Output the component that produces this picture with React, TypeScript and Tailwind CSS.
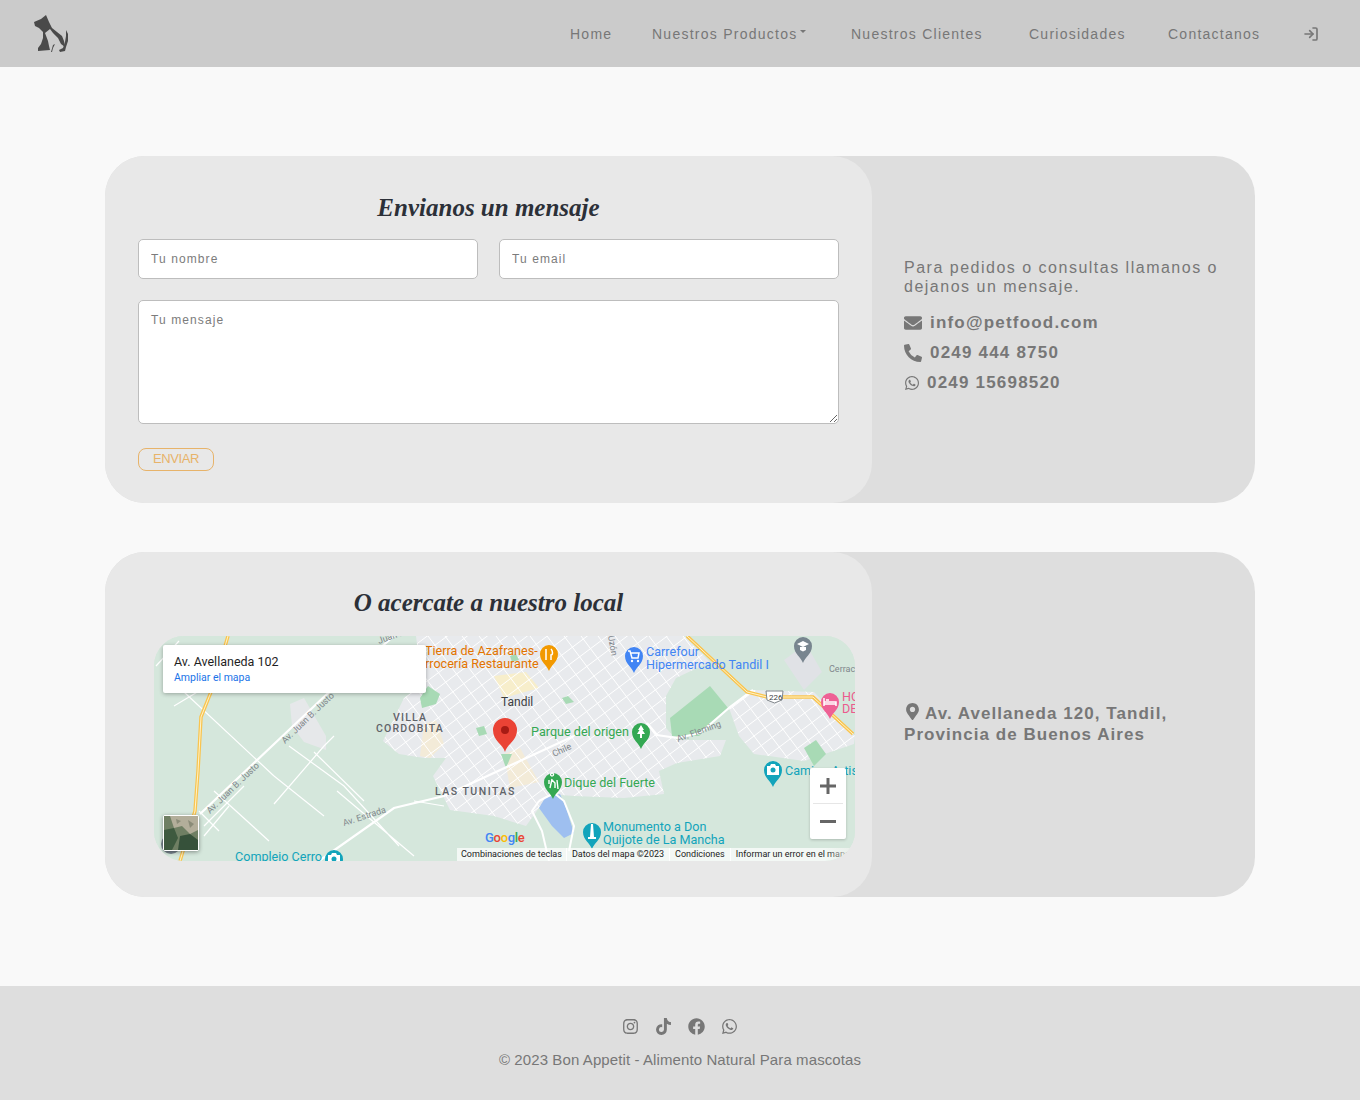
import React from 'react';
import { FaEnvelope, FaPhoneAlt, FaWhatsapp, FaMapMarkerAlt, FaInstagram, FaTiktok, FaFacebook } from 'react-icons/fa';
import { LogIn } from 'lucide-react';

const navItems = [
    { label: 'Home', width: 'w-[38px]' },
    { label: 'Nuestros Productos', width: 'w-[155px]', caret: true },
    { label: 'Nuestros Clientes', width: 'w-[134px]' },
    { label: 'Curiosidades', width: 'w-[95px]' },
    { label: 'Contactanos', width: 'w-[91px]' },
];

const Logo = () => (
    <svg width="38" height="40" viewBox="0 0 38 40" fill="#4a4a4a">
        <path d="M13 1 L16 8 L19 14 L24 18 L29 22 L31 27 L32 33 L28 30 L25 24 L20 19 L17 15 L12 19 L15 27 L16 32 L17 36 L5 37 L5 34 L8 30 L10 24 L10 18 L6 14 L2 12 L1 8 L8 5 Z" />
        <path d="M33 16 L35 20 L35 27 L33 33 L32 37 L27 38 L26 36 L30 34 L32 28 L33 22 Z" />
        <path d="M20 31 L22 30 L20 34 L19 38 L18 38 Z" />
    </svg>
);

const Pin = ({ x, y, color, children }: { x: number; y: number; color: string; children?: React.ReactNode }) => (
    <g transform={`translate(${x} ${y})`}>
        <path d="M0 16 C-2 10 -9 7 -9 -1 A9 9 0 1 1 9 -1 C9 7 2 10 0 16 Z" fill={color} />
        {children}
    </g>
);

const gridA = Array.from({ length: 60 }, (_, i) => i * 17 - 200);
const gridB = Array.from({ length: 50 }, (_, i) => i * 15 - 150);

const cityPath = "M262 0 L530 0 L556 26 L522 42 L512 60 L512 92 L522 104 L572 104 L566 120 L523 127 L505 135 L510 158 L470 162 L420 160 L395 158 L372 190 L340 180 L296 174 L279 140 L292 122 L270 122 L245 118 L229 105 L250 62 L268 48 Z";
const eastPath = "M575 72 L597 54 L660 56 L701 100 L700 108 L650 125 L600 118 L585 100 Z";

const MapDrawing = () => (
    <svg className="absolute inset-0" width="701" height="225" viewBox="0 0 701 225" fontFamily="Roboto, sans-serif">
        <defs>
            <clipPath id="city"><path d={cityPath} /></clipPath>
            <clipPath id="cityEast"><path d={eastPath} /></clipPath>
        </defs>
        <rect width="701" height="225" fill="#d5e7dc" />
        <path d={cityPath} fill="#e8eaed" />
        <path d={eastPath} fill="#e8eaed" />
        <path d="M136 68 L150 62 L172 100 L172 114 L150 106 L138 90 Z" fill="#e6e8ea" />
        <path d="M630 24 L652 8 L668 36 L650 54 Z" fill="#e0e2e6" />
        <path d="M270 88 L282 84 L290 108 L276 122 L266 120 Z" fill="#f3ebd8" />
        <path d="M350 118 L366 112 L385 146 L356 152 Z" fill="#f3ebd8" />
        <path d="M340 40 L372 36 L385 52 L350 62 Z" fill="#f7eecb" />
        <g clipPath="url(#city)" stroke="#fff" strokeWidth="1">
            {gridA.map(v => <line key={v} x1={v} y1="-20" x2={v + 180} y2="220" />)}
            {gridB.map(v => <line key={v} x1="200" y1={v + 160} x2="560" y2={v - 110} />)}
        </g>
        <g clipPath="url(#cityEast)" stroke="#fff" strokeWidth="1">
            {gridA.map(v => <line key={v} x1={v + 200} y1="-20" x2={v + 380} y2="220" />)}
            {gridB.map(v => <line key={v} x1="500" y1={v + 160} x2="720" y2={v - 5} />)}
        </g>
        <g fill="#a8dab5">
            <path d="M516 82 L556 50 L574 72 L545 100 L518 100 Z" />
            <path d="M650 112 L662 104 L672 118 L660 130 Z" />
            <path d="M266 62 L274 50 L286 58 L282 68 L268 72 Z" />
            <path d="M408 62 L414 60 L420 66 L412 68 Z" />
            <path d="M347 118 L358 118 L352 132 Z" />
            <path d="M322 92 L330 90 L333 98 L325 100 Z" />
            <path d="M356 20 L362 18 L365 24 L358 26 Z" />
        </g>
        <path d="M391 162 L406 158 L412 172 L420 197 L410 202 L398 190 L385 172 Z" fill="#9ebff0" />
        <path d="M385 165 L400 157 L410 165 L420 190 L415 215 M385 165 L378 175 L388 195 L395 225" fill="none" stroke="#fff" strokeWidth="2" />
        <g stroke="#fff" strokeWidth="1.2" fill="none">
            <path d="M2 30 L25 5 M20 70 L70 40 M30 56 L120 140 M120 168 L170 110 L180 100 M135 110 L190 150 L245 210 M183 155 L260 220" />
            <path d="M160 116 L210 165 M120 140 L170 180 M260 165 L290 170" />
            <path d="M60 155 L115 205 M75 170 L50 200 M90 150 L50 190 M45 175 L65 195" />
        </g>
        <path d="M46 178 L173 58 L240 0" stroke="#fff" strokeWidth="2.2" fill="none" />
        <path d="M165 225 L240 172 L290 160 L420 100" stroke="#fff" strokeWidth="2.2" fill="none" />
        <path d="M493 87 L503 99 L523 102 L546 97 L576 71 L599 54" stroke="#fff" strokeWidth="2.2" fill="none" />
        <path d="M74 0 L59 51 L47 81 L44 135 L41 175 L26 225" stroke="#f9c44f" strokeWidth="3.5" fill="none" />
        <path d="M74 0 L59 51 L47 81 L44 135 L41 175 L26 225" stroke="#fff3c9" strokeWidth="1" fill="none" />
        <path d="M533 0 L593 56 L613 61 L659 61 L699 98" stroke="#f9c44f" strokeWidth="3.5" fill="none" />
        <path d="M533 0 L593 56 L613 61 L659 61 L699 98" stroke="#fff3c9" strokeWidth="1" fill="none" />

        <text x="239" y="85" fontSize="10.5" letterSpacing="1.2" fill="#5f6368" fontWeight="500">VILLA</text>
        <text x="222" y="96" fontSize="10.5" letterSpacing="1.2" fill="#5f6368" fontWeight="500">CORDOBITA</text>
        <text x="281" y="159" fontSize="10.5" letterSpacing="1.5" fill="#5f6368" fontWeight="500">LAS TUNITAS</text>
        <text x="347" y="70" fontSize="12" fill="#3c4043">Tandil</text>
        <g fontSize="9" fill="#80868b">
            <text transform="translate(56 178) rotate(-44)">Av. Juan B. Justo</text>
            <text transform="translate(131 108) rotate(-44)">Av. Juan B. Justo</text>
            <text transform="translate(190 190) rotate(-18)">Av. Estrada</text>
            <text transform="translate(524 106) rotate(-20)">Av. Fleming</text>
            <text transform="translate(400 121) rotate(-25)">Chile</text>
            <text transform="translate(225 8) rotate(-20)">Juan B.</text>
            <text transform="translate(454 0) rotate(80)">Uzón</text>
            <text x="675" y="36">Cerrac</text>
        </g>
        <g fontSize="12.6">
            <text x="271" y="19" fill="#e37400">Tierra de Azafranes-</text>
            <text x="271" y="32" fill="#e37400">rrocería Restaurante</text>
            <text x="492" y="20" fill="#4285f4">Carrefour</text>
            <text x="492" y="33" fill="#4285f4">Hipermercado Tandil I</text>
            <text x="377" y="100" fill="#34a853">Parque del origen</text>
            <text x="410" y="151" fill="#34a853">Dique del Fuerte</text>
            <text x="449" y="195" fill="#12a4bb">Monumento a Don</text>
            <text x="449" y="208" fill="#12a4bb">Quijote de La Mancha</text>
            <text x="631" y="139" fill="#12a4bb">Camino Artist</text>
            <text x="688" y="65" fill="#ec5a8d">HO</text>
            <text x="688" y="77" fill="#ec5a8d">DE</text>
            <text x="81" y="225" fill="#12a4bb">Complejo Cerro</text>
        </g>
        <Pin x={395} y={19} color="#f29900">
            <path d="M-3 -6 V-1 M-3 -1 V5 M2 -6 C4 -4 4 0 2 0 V5" stroke="#fff" strokeWidth="1.5" fill="none" />
        </Pin>
        <Pin x={480} y={21} color="#4285f4">
            <path d="M-6 -6 H-4 L-2 1 H4 L5 -4 H-3" stroke="#fff" strokeWidth="1.5" fill="none" />
            <circle cx="-2" cy="4" r="1.2" fill="#fff" /><circle cx="4" cy="4" r="1.2" fill="#fff" />
        </Pin>
        <Pin x={649} y={11} color="#78858f">
            <path d="M-6 -3 L0 -6 L6 -3 L0 0 Z M-3 0 V3 L0 4.5 L3 3 V0" fill="#fff" />
        </Pin>
        <Pin x={676} y={67} color="#ee6195">
            <path d="M-6 -5 V3 M-6 1 H6 V3 M-6 -1 H6 V1 M-4 -3 H-1" stroke="#fff" strokeWidth="1.5" fill="none" />
        </Pin>
        <Pin x={487} y={97} color="#34a853">
            <path d="M0 -8 L3 -3 H1.5 L4 1 H1 V5 H-1 V1 H-4 L-1.5 -3 H-3 Z" fill="#fff" />
        </Pin>
        <Pin x={399} y={147} color="#34a853">
            <path d="M-1 -7 A1.5 1.5 0 1 1 -0.9 -7 M-1 -4 L-3 5 M-1 -3 L2 0 L2 5 M4 -3 L5 6 M-4 -3 L-4 1" stroke="#fff" strokeWidth="1.4" fill="none" />
        </Pin>
        <Pin x={438} y={197} color="#12a4bb">
            <path d="M-1 -9 H1 L2 4 H4 V6 H-4 V4 H-2 Z" fill="#fff" />
        </Pin>
        <Pin x={619} y={135} color="#12a4bb">
            <path d="M-6 -5 H-3 L-2 -7 H2 L3 -5 H6 V4 H-6 Z" fill="#fff" />
            <circle cx="0" cy="-1" r="2.5" fill="#12a4bb" />
        </Pin>
        <Pin x={180} y={224} color="#12a4bb">
            <path d="M-6 -5 H-3 L-2 -7 H2 L3 -5 H6 V4 H-6 Z" fill="#fff" />
            <circle cx="0" cy="-1" r="2.5" fill="#12a4bb" />
        </Pin>
        <g transform="translate(351 97)">
            <path d="M0 19 C-2 11 -12 8 -12 -3 A12 12 0 1 1 12 -3 C12 8 2 11 0 19 Z" fill="#ea4335" />
            <circle cx="0" cy="-3" r="4" fill="#a61b14" />
        </g>
        <g>
            <path d="M612 55 H629 L628 64 L620.5 67 L613 64 Z" fill="#fff" stroke="#80868b" />
            <text x="615" y="64" fontSize="8" fill="#3c4043">226</text>
        </g>
        <circle cx="17" cy="208" r="10" fill="#78858f" />
    </svg>
);

const SatelliteThumb = () => (
    <svg width="34" height="34" viewBox="0 0 34 34">
        <rect width="34" height="34" fill="#6f7f63" />
        <path d="M6 0 H34 V14 L26 18 L18 10 L10 12 Z" fill="#b3ae9a" />
        <path d="M0 14 L10 12 L14 22 L8 34 H0 Z" fill="#3e5a3f" />
        <path d="M16 20 L26 18 L34 24 V34 H14 Z" fill="#36513a" />
        <path d="M24 4 L30 8 L26 12 Z M12 3 L17 5 L13 8 Z" fill="#8b8c78" />
    </svg>
);

const MapEmbed = () => (
    <div className="relative h-[225px] w-[701px] overflow-hidden rounded-[30px] bg-[#d5e7dc] font-['Roboto',sans-serif]">
        <MapDrawing />
        <div className="absolute left-[9px] top-[9px] h-[48px] w-[263px] rounded-[2px] bg-white px-[11px] pt-[9px] shadow-[0_1px_4px_rgba(0,0,0,0.3)]">
            <p className="text-[12.5px] leading-[16px] text-[#1f1f1f]">Av. Avellaneda 102</p>
            <p className="text-[10.5px] leading-[15px] text-[#1a73e8]">Ampliar el mapa</p>
        </div>
        <div className="absolute left-[9px] top-[179px] h-[36px] w-[36px] rounded-[2px] border border-white shadow-[0_1px_4px_rgba(0,0,0,0.4)]">
            <SatelliteThumb />
        </div>
        <div className="absolute left-[331px] top-[195px] text-[13px] font-medium leading-[14px] tracking-[-0.3px]">
            <span className="text-[#4285f4]">G</span><span className="text-[#ea4335]">o</span><span className="text-[#fbbc05]">o</span><span className="text-[#4285f4]">g</span><span className="text-[#34a853]">l</span><span className="text-[#ea4335]">e</span>
        </div>
        <div className="absolute left-[656px] top-[132px] flex h-[71px] w-[36px] flex-col items-center rounded-[2px] bg-white shadow-[0_1px_3px_rgba(0,0,0,0.2)]">
            <div className="flex h-[35px] items-center justify-center">
                <svg width="16" height="16" viewBox="0 0 16 16" fill="#666"><path d="M6.5 0 H9.5 V6.5 H16 V9.5 H9.5 V16 H6.5 V9.5 H0 V6.5 H6.5 Z" /></svg>
            </div>
            <div className="h-px w-[30px] bg-[#e6e6e6]" />
            <div className="flex h-[35px] items-center justify-center"><div className="h-[3px] w-[16px] bg-[#666]" /></div>
        </div>
        <div className="absolute bottom-0 left-[303px] flex h-[13px] w-[398px] items-center overflow-hidden bg-white/70 text-[9px] leading-[13px] text-[#222]">
            <span className="whitespace-nowrap px-[4px]">Combinaciones de teclas</span>
            <span className="whitespace-nowrap border-l border-white px-[5px]">Datos del mapa ©2023</span>
            <span className="whitespace-nowrap border-l border-white px-[5px]">Condiciones</span>
            <span className="whitespace-nowrap border-l border-white px-[5px]">Informar un error en el mapa</span>
        </div>
        <div className="absolute bottom-0 right-0 h-[13px] w-[30px] bg-gradient-to-r from-transparent to-[#e8eee9]" />
    </div>
);

export default function App() {
    const display = "font-['Liberation_Sans',sans-serif]";
    const script = "font-['Liberation_Serif',serif] italic font-bold text-[#2c3038]";
    const field = "w-full rounded-[5px] border border-[#bdbdbd] bg-white px-3 text-[12px] tracking-[1.1px] text-[#666] outline-none placeholder:text-[#7c7c7c] " + display;

    return (
        <div className="min-h-[1100px] bg-[#f9f9f9]">
            <nav className="flex h-[67px] items-center justify-between bg-[#cbcbcb] pl-[33px] pr-[41px]">
                <Logo />
                <div className={"flex items-center gap-[44px] pt-[1px] text-[14px] tracking-[1.25px] text-[#777] " + display}>
                    {navItems.map(item => (
                        <a key={item.label} className={"flex items-center whitespace-nowrap " + item.width}>
                            {item.label}
                            {item.caret && <span className="mb-[5px] ml-[3px] h-0 w-0 border-x-[3px] border-t-[3px] border-x-transparent border-t-[#777]" />}
                        </a>
                    ))}
                    <LogIn size={16} strokeWidth={2.5} className="text-[#777]" />
                </div>
            </nav>

            <main className="mx-auto flex w-[1150px] flex-col gap-[49px] pt-[89px]">
                <section className="flex h-[347px] rounded-[40px] bg-[#dedede]">
                    <div className="flex w-[767px] flex-col rounded-[40px] bg-[#e8e8e8] px-[33px]">
                        <h2 className={"mt-[31px] h-[52px] text-center text-[25px] leading-[42px] " + script}>Envianos un mensaje</h2>
                        <form className="flex flex-col">
                            <div className="flex gap-[21px]">
                                <input className={"h-[40px] " + field} placeholder="Tu nombre" />
                                <input className={"h-[40px] " + field} placeholder="Tu email" />
                            </div>
                            <textarea className={"mt-[21px] block h-[124px] pt-[10px] " + field} placeholder="Tu mensaje" />
                            <button type="button" className="mt-[24px] h-[23px] w-[76px] rounded-[8px] border border-[#e7b36a] pb-[1px] font-['Liberation_Sans',sans-serif] text-[13px] tracking-[-0.4px] text-[#e7b36a]">ENVIAR</button>
                        </form>
                    </div>
                    <div className={"flex flex-1 flex-col justify-center px-[32px] pb-[3px] text-[#777] " + display}>
                        <p className="text-[16px] leading-[19px] tracking-[1.5px]">Para pedidos o consultas llamanos o dejanos un mensaje.</p>
                        <div className="mt-[12px] flex flex-col text-[17px] font-bold leading-[30px] tracking-[1.2px]">
                            <div className="flex items-center gap-[8px]"><FaEnvelope size={18} />info@petfood.com</div>
                            <div className="flex items-center gap-[8px]"><FaPhoneAlt size={18} />0249 444 8750</div>
                            <div className="flex items-center gap-[7px]"><FaWhatsapp size={16} />0249 15698520</div>
                        </div>
                    </div>
                </section>

                <section className="flex h-[345px] rounded-[40px] bg-[#dedede]">
                    <div className="flex w-[767px] flex-col rounded-[40px] bg-[#e8e8e8]">
                        <h2 className={"mt-[30px] h-[54px] text-center text-[25px] leading-[42px] " + script}>O acercate a nuestro local</h2>
                        <div className="ml-[49px]"><MapEmbed /></div>
                    </div>
                    <div className={"flex flex-1 flex-col justify-center px-[32px] pb-[2px] text-[17px] font-bold leading-[21px] tracking-[1.05px] text-[#777] " + display}>
                        <p><FaMapMarkerAlt size={17} className="mr-[4px] inline align-[-1px]" />Av. Avellaneda 120, Tandil,<br />Provincia de Buenos Aires</p>
                    </div>
                </section>
            </main>

            <footer className="mt-[89px] flex h-[114px] flex-col items-center bg-[#dedede] pt-[32px] text-[#777]">
                <div className="flex items-center gap-[16px]">
                    <FaInstagram size={17} />
                    <FaTiktok size={17} />
                    <FaFacebook size={17} />
                    <FaWhatsapp size={17} />
                </div>
                <p className={"mt-[15px] text-[15px] leading-[20px] tracking-[0.1px] " + display}>© 2023 Bon Appetit - Alimento Natural Para mascotas</p>
            </footer>
        </div>
    );
}
